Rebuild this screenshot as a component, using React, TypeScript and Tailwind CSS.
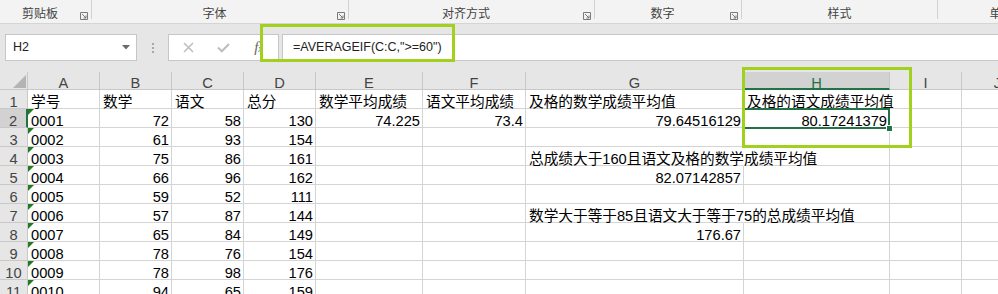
import React from 'react';

type Cell = { v: string; r?: boolean; tri?: boolean; over?: boolean };

const t = (v: string, over = false): Cell => ({ v, over });
const n = (v: string): Cell => ({ v, r: true });
const id = (v: string): Cell => ({ v, tri: true });
const e: Cell = { v: '' };

const pad = (cells: Cell[]) => [...cells, ...Array(10 - cells.length).fill(e)];

const rows: Cell[][] = [
  [t('学号'), t('数学'), t('语文'), t('总分'), t('数学平均成绩'), t('语文平均成绩'), t('及格的数学成绩平均值'), t('及格的语文成绩平均值', true)],
  [id('0001'), n('72'), n('58'), n('130'), n('74.225'), n('73.4'), n('79.64516129'), n('80.17241379')],
  [id('0002'), n('61'), n('93'), n('154')],
  [id('0003'), n('75'), n('86'), n('161'), e, e, t('总成绩大于160且语文及格的数学成绩平均值', true)],
  [id('0004'), n('66'), n('96'), n('162'), e, e, n('82.07142857')],
  [id('0005'), n('59'), n('52'), n('111')],
  [id('0006'), n('57'), n('87'), n('144'), e, e, t('数学大于等于85且语文大于等于75的总成绩平均值', true)],
  [id('0007'), n('65'), n('84'), n('149'), e, e, n('176.67')],
  [id('0008'), n('78'), n('76'), n('154')],
  [id('0009'), n('78'), n('98'), n('176')],
  [id('0010'), n('94'), n('65'), n('159')],
].map(pad);

const letters = ['A', 'B', 'C', 'D', 'E', 'F', 'G', 'H', 'I', 'J'];

const groups = [
  { label: '剪贴板', w: 'w-[92px]', launcher: true },
  { label: '字体', w: 'w-[257px]', launcher: true },
  { label: '对齐方式', w: 'w-[246px]', launcher: true },
  { label: '数字', w: 'w-[147px]', launcher: true },
  { label: '样式', w: 'w-[196px]', launcher: false },
  { label: '单元格', w: 'w-[140px]', launcher: false },
];

const Launcher = () => (
  <svg width="8" height="8" viewBox="0 0 8 8" className="mt-[12px] mr-[3px] shrink-0" fill="none" stroke="#7a7a7a" strokeWidth="1">
    <path d="M0.5 7.5V0.5H7.5V7.5H0.5" />
    <path d="M2 2L6 6M6 3.5V6H3.5" />
  </svg>
);

const App: React.FC = () => {
  return (
    <div className="relative w-[998px] h-[294px] overflow-hidden bg-white font-['Liberation_Sans','Noto_Sans_CJK_SC',sans-serif]">
      {/* Ribbon group labels */}
      <div className="flex h-[24px] border-b border-[#d5d5d5] bg-[#f3f3f3] text-[12px] text-[#444]">
        {groups.map((g) => (
          <div key={g.label} className={`flex shrink-0 ${g.w}`}>
            <div className="flex-1 text-center pt-[8px] leading-[12px] whitespace-nowrap">{g.label}</div>
            {g.launcher && <Launcher />}
            <div className="w-px h-[19px] bg-[#d2d2d2] shrink-0" />
          </div>
        ))}
      </div>

      {/* Formula bar */}
      <div className="flex items-start h-[48px] pt-[10px] bg-[#e6e6e6]">
        <div className="ml-[5px] w-[132px] h-[27px] bg-white border border-[#c6c6c6] flex items-center pl-[7px] text-[12.5px] text-[#222]">
          H2
          <svg width="8" height="5" viewBox="0 0 8 5" className="ml-auto mr-[6px]">
            <path d="M0 0H8L4 4.5Z" fill="#6b6b6b" />
          </svg>
        </div>
        <div className="ml-[14px] w-[3px] h-[27px] flex flex-col items-center justify-center gap-[2px]">
          <span className="w-[2px] h-[2px] bg-[#a8a8a8]" />
          <span className="w-[2px] h-[2px] bg-[#a8a8a8]" />
          <span className="w-[2px] h-[2px] bg-[#a8a8a8]" />
        </div>
        <div className="ml-[14px] w-[111px] h-[27px] bg-white border border-[#c6c6c6] flex items-center pl-[2px]">
          <div className="w-[35px] flex justify-center">
            <svg width="11" height="11" viewBox="0 0 11 11" stroke="#bdbdbd" strokeWidth="1.5">
              <path d="M1 1L10 10M10 1L1 10" />
            </svg>
          </div>
          <div className="w-[35px] flex justify-center">
            <svg width="13" height="11" viewBox="0 0 13 11" fill="none" stroke="#bdbdbd" strokeWidth="2">
              <path d="M1 5.5L4.8 9.3L12 2" />
            </svg>
          </div>
          <div className="w-[35px] flex justify-center">
            <span className="italic font-['Liberation_Serif',serif] text-[15px] leading-none text-[#666]">
              f<span className="text-[10px]">x</span>
            </span>
          </div>
        </div>
        <div className="ml-[3px] flex-1 h-[27px] bg-white border-y border-l border-[#c6c6c6] flex items-center pl-[10px] text-[12.5px] text-[#222] whitespace-nowrap">
          =AVERAGEIF(C:C,"&gt;=60")
        </div>
      </div>

      {/* Sheet grid */}
      <div className="grid grid-cols-[28px_72px_72px_72px_72px_107px_103px_218px_146px_72px_72px] grid-rows-[18px_repeat(11,19px)] w-[1034px] text-[14.67px]">
        <div className="relative bg-[#e6e6e6] border-r border-b border-[#c8c8c8]">
          <svg width="28" height="18" className="absolute inset-0">
            <polygon points="26,3 26,16 13,16" fill="#b4b4b4" />
          </svg>
        </div>
        {letters.map((l) =>
          l === 'H' ? (
            <div key={l} className="bg-[#d2d2d2] border-r border-[#c8c8c8] border-b-2 border-b-[#217346] text-center leading-[14px] pt-[4px] text-[#217346]">
              {l}
            </div>
          ) : (
            <div key={l} className="bg-[#e6e6e6] border-r border-b border-[#c8c8c8] text-center leading-[14px] pt-[4px] text-[#444]">
              {l}
            </div>
          )
        )}

        {rows.map((row, ri) => (
          <React.Fragment key={ri}>
            {ri === 1 ? (
              <div className="bg-[#d2d2d2] border-b border-[#c8c8c8] border-r-2 border-r-[#217346] text-center leading-[14px] pt-[5px] text-[#444]">
                {ri + 1}
              </div>
            ) : (
              <div className="bg-[#e6e6e6] border-r border-b border-[#c8c8c8] text-center leading-[14px] pt-[5px] text-[#444]">
                {ri + 1}
              </div>
            )}
            {row.map((c, ci) => (
              <div
                key={ci}
                className={`relative whitespace-nowrap border-b border-[#d4d4d4] leading-[14px] pt-[5px] text-black ${
                  c.over ? 'border-r border-r-transparent z-[1]' : 'border-r border-r-[#d4d4d4]'
                } ${c.r ? 'text-right pr-[2px]' : 'pl-[3px]'}`}
              >
                {c.tri && (
                  <span className="absolute left-0 top-0 w-0 h-0 border-t-[6px] border-r-[6px] border-t-[#1e7b1e] border-r-transparent" />
                )}
                {c.v}
                {ri === 1 && ci === 7 && (
                  <>
                    <span className="absolute -left-[1px] -top-[1px] w-[147px] h-[21px] border-2 border-[#217346] z-10" />
                    <span className="absolute left-[142px] top-[16px] w-[7px] h-[7px] bg-[#217346] border border-white z-10" />
                  </>
                )}
              </div>
            ))}
          </React.Fragment>
        ))}
      </div>

      {/* Highlight annotations */}
      <div className="absolute left-[260px] top-[24px] w-[195px] h-[38px] border-[3px] border-[#a2d11d] z-20" />
      <div className="absolute left-[742px] top-[67px] w-[170px] h-[81px] border-[3px] border-[#a2d11d] z-20" />
    </div>
  );
};

export default App;
